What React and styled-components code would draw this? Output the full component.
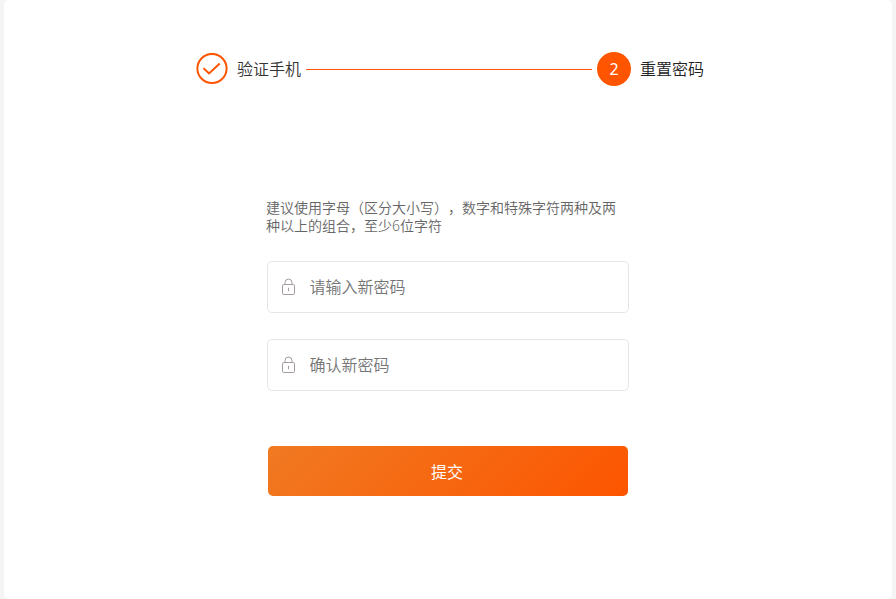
import React from "react";
// Styled
import styled, { createGlobalStyle } from "styled-components";

const LockIcon = () => (
  <svg width="15" height="18" viewBox="0 0 15 18" fill="none" stroke="#a39ca0">
    <rect x="1.5" y="6.5" width="12" height="10" rx="1.3" />
    <path d="M4 6.5V4.6a3.5 3.5 0 0 1 7 0v1.9M7.5 9.8v3.4" />
  </svg>
);

const CheckIcon = () => (
  <svg width="32" height="32" viewBox="0 0 32 32" fill="none" stroke="#ff5500">
    <circle cx="16" cy="15.5" r="14.6" strokeWidth="2" />
    <path d="M7.5 15.2l5.6 5.2L23.7 10.4" strokeWidth="2" />
  </svg>
);

const App = () => {
  return (
    <>
      <GlobalStyle />
      <Card>
        <Steps>
          <CheckIcon />
          <StepLabel>验证手机</StepLabel>
          <StepLine />
          <StepNumber>2</StepNumber>
          <StepLabel $active>重置密码</StepLabel>
        </Steps>
        <Form onSubmit={(e) => e.preventDefault()}>
          <Tip>建议使用字母（区分大小写），数字和特殊字符两种及两种以上的组合，至少6位字符</Tip>
          <Field>
            <LockIcon />
            <Input type="password" placeholder="请输入新密码" />
          </Field>
          <Field>
            <LockIcon />
            <Input type="password" placeholder="确认新密码" />
          </Field>
          <Submit type="submit">提交</Submit>
        </Form>
      </Card>
    </>
  );
};

const GlobalStyle = createGlobalStyle`
  * {
    box-sizing: border-box;
  }
  body {
    margin: 0;
    background: #f4f4f4;
    font-family: "Noto Sans", "Noto Sans CJK SC", sans-serif;
    font-weight: 350;
    text-spacing-trim: space-all;
  }
`;

const Card = styled.main`
  height: 599px;
  margin: 0 4px;
  padding-top: 52px;
  background: #fff;
  border-radius: 5px;
  overflow: hidden;
`;

const Steps = styled.div`
  display: flex;
  align-items: center;
  width: 508px;
  height: 34px;
  margin-left: 192px;
`;

const StepLabel = styled.span`
  margin-left: 9px;
  font-size: 16px;
  line-height: 22px;
  white-space: nowrap;
  color: ${(props) => (props.$active ? "#222" : "#333")};
`;

const StepLine = styled.div`
  flex: 1;
  height: 1px;
  margin: 1px 5px 0;
  background: #ff5500;
`;

const StepNumber = styled.span`
  width: 34px;
  height: 34px;
  border-radius: 50%;
  background: #ff5500;
  color: #fff;
  font-size: 16px;
  font-weight: 400;
  line-height: 34px;
  text-align: center;
`;

const Form = styled.form`
  width: 362px;
  margin: 113px 0 0 263px;
`;

const Tip = styled.p`
  width: 352px;
  margin: 0 0 26px -1px;
  color: #666;
  font-size: 14px;
  line-height: 18px;
`;

const Field = styled.label`
  display: flex;
  align-items: center;
  height: 52px;
  margin-bottom: 26px;
  padding-left: 13px;
  border: 1px solid #e6e6e6;
  border-radius: 5px;
`;

const Input = styled.input`
  flex: 1;
  min-width: 0;
  height: 48px;
  margin-left: 13.5px;
  padding: 0;
  border: 0;
  outline: 0;
  background: none;
  font-family: inherit;
  font-size: 16px;
  font-weight: inherit;

  &::placeholder {
    color: #757575;
  }
`;

const Submit = styled.button`
  display: block;
  width: 360px;
  height: 50px;
  margin: 55px 0 0 1px;
  padding: 0 2px 0 0;
  border: 0;
  border-radius: 5px;
  background: linear-gradient(135deg, #f07a22, #fd5500);
  color: #fff;
  font-family: inherit;
  font-size: 16px;
`;

export default App;
